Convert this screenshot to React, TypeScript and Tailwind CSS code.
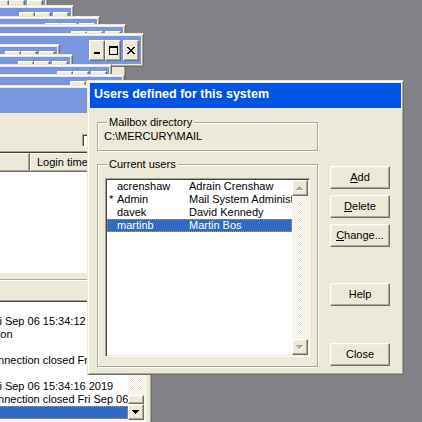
import React from 'react';

type Win = { top: number; right: number; strip?: boolean };

// cascaded child windows behind the dialog, in paint order
const windows: Win[] = [
  { top: -7, right: 48 },
  { top: 5, right: 74 },
  { top: 16, right: 100 },
  { top: 24, right: 126 },
  { top: 33, right: 144, strip: true },
  { top: 44, right: 60 },
  { top: 54, right: 73 },
  { top: 64, right: 112 },
  { top: 74, right: 125 },
];

const users = [
  { flag: '', login: 'acrenshaw', name: 'Adrain Crenshaw' },
  { flag: '*', login: 'Admin', name: 'Mail System Administrator' },
  { flag: '', login: 'davek', name: 'David Kennedy' },
  { flag: '', login: 'martinb', name: 'Martin Bos' },
];

const selectedUser = 'martinb';

const logLines = [
  { text: '', indent: 'pl-[52px]' },
  { text: 'Fri Sep 06 15:34:12 2019', indent: 'pl-[52px]' },
  { text: 'Logon', indent: 'pl-[45px]' },
  { text: '', indent: 'pl-[52px]' },
  { text: 'Connection closed Fri Sep 06 15:34:13 2019', indent: 'pl-[47px]' },
  { text: '', indent: 'pl-[52px]' },
  { text: 'Fri Sep 06 15:34:16 2019', indent: 'pl-[52px]' },
  { text: 'Connection closed Fri Sep 06 15:34:17 2019', indent: 'pl-[47px]' },
];

const raised =
  'border border-t-white border-l-white border-r-[#716f64] border-b-[#716f64] bg-[#ece9d8] shadow-[inset_-1px_-1px_0_#aca899,inset_1px_1px_0_#f1efe2]';
const frame =
  'border border-t-[#ece9d8] border-l-[#ece9d8] border-r-[#716f64] border-b-[#716f64] bg-[#ece9d8] p-[2px] shadow-[inset_1px_1px_0_#fff,inset_-1px_-1px_0_#aca899]';
const sunken =
  'border border-t-[#aca899] border-l-[#aca899] border-r-white border-b-white p-px shadow-[inset_1px_1px_0_#404040,inset_-1px_-1px_0_#f1efe2]';
const groupBox =
  'min-w-0 border border-[#aca899] shadow-[inset_1px_1px_0_#fff,1px_1px_0_#fff]';

function Arrow({ down, disabled }: { down?: boolean; disabled?: boolean }) {
  const d = down
    ? 'M0 0h7v1H0zM1 1h5v1H1zM2 2h3v1H2zM3 3h1v1H3z'
    : 'M3 0h1v1H3zM2 1h3v1H2zM1 2h5v1H1zM0 3h7v1H0z';
  return (
    <svg width="8" height="5" shapeRendering="crispEdges">
      {disabled && <path d={d} fill="#fff" transform="translate(1 1)" />}
      <path d={d} fill={disabled ? '#aca899' : '#000'} />
    </svg>
  );
}

function ScrollButton({ down, disabled }: { down?: boolean; disabled?: boolean }) {
  return (
    <div className={`${raised} flex h-4 w-4 shrink-0 items-center justify-center`}>
      <Arrow down={down} disabled={disabled} />
    </div>
  );
}

function CaptionButtons() {
  return (
    <div className="flex">
      <div className={`${raised} flex h-[21px] w-4 items-end justify-start pb-[6px] pl-[4px]`}>
        <svg width="6" height="2" shapeRendering="crispEdges">
          <rect width="6" height="2" fill="#000" />
        </svg>
      </div>
      <div className={`${raised} flex h-[21px] w-4 items-center justify-center`}>
        <svg width="9" height="9" shapeRendering="crispEdges">
          <path d="M0 0h9v2H0zM0 2h1v7H0zM8 2h1v7H8zM0 8h9v1H0z" fill="#000" />
        </svg>
      </div>
      <div className={`${raised} ml-[2px] flex h-[21px] w-4 items-center justify-center`}>
        <svg width="8" height="7" shapeRendering="crispEdges">
          <path
            d="M0 0h2v1H0zM6 0h2v1H6zM1 1h2v1H1zM5 1h2v1H5zM2 2h4v1H2zM3 3h2v1H3zM2 4h4v1H2zM1 5h2v1H1zM5 5h2v1H5zM0 6h2v1H0zM6 6h2v1H6z"
            fill="#000"
          />
        </svg>
      </div>
    </div>
  );
}

function CascadeWindow({ top, right, strip }: Win) {
  const width = 260;
  return (
    <div
      className={`${frame} absolute flex flex-col`}
      style={{ top, left: right - width, width, height: strip ? 34 : 320 }}
    >
      <div className="flex h-[28px] shrink-0 items-start justify-end bg-[#7a96df] pr-[2px] pt-[4px]">
        <CaptionButtons />
      </div>
    </div>
  );
}

function MainWindow() {
  return (
    <div className={`${frame} absolute left-[-68px] top-[85px] flex h-[345px] w-[220px] flex-col`}>
      <div className="flex h-[25px] shrink-0 items-start justify-end bg-[#7a96df] pr-[2px] pt-[2px]">
        <CaptionButtons />
      </div>
      <div className="flex flex-1 flex-col pr-[3px]">
        <div className="h-[38px] shrink-0 pl-[147px] pt-[21px]">
          <div className={`${sunken} h-[13px] w-[13px] bg-white`} />
        </div>
        <div className="shrink-0 border-t border-t-[#aca899] pt-px shadow-[inset_0_1px_0_#404040]">
          <div className="flex h-[19px] overflow-hidden">
            <div className="w-[95px] shrink-0 border-r border-b border-r-[#716f64] border-b-[#716f64] shadow-[inset_1px_1px_0_#fff,inset_-1px_-1px_0_#aca899]" />
            <div className="w-[120px] shrink-0 border-r border-b border-r-[#716f64] border-b-[#716f64] pl-[7px] leading-[18px] shadow-[inset_1px_1px_0_#fff,inset_-1px_-1px_0_#aca899]">
              Login time
            </div>
          </div>
          <div className="h-[101px] bg-white" />
        </div>
        <div className="h-[27px] shrink-0 pt-[6px]">
          <div className="border-t border-b border-t-[#aca899] border-b-white" />
        </div>
        <div className={`${sunken} flex h-[122px] shrink-0 bg-white`}>
          <div className="flex flex-1 flex-col overflow-hidden">
            {logLines.map((line, i) => (
              <div key={i} className={`h-[13px] shrink-0 whitespace-nowrap ${line.indent}`}>
                {line.text}
              </div>
            ))}
            <div className="h-[13px] shrink-0 bg-[#316ac5] outline-1 outline-dotted outline-[#ce953a] -outline-offset-1" />
          </div>
          <div className="flex w-4 shrink-0 flex-col">
            <ScrollButton />
            <div className="flex-1 bg-[repeating-conic-gradient(#fff_0_25%,#ece9d8_0_50%)] bg-[length:2px_2px]" />
            <div className={`${raised} h-[9px] shrink-0`} />
            <ScrollButton down />
          </div>
        </div>
      </div>
    </div>
  );
}

function DialogButton({ children, className = '' }: { children: React.ReactNode; className?: string }) {
  return (
    <div className={`${raised} flex h-[23px] w-[60px] items-center justify-center ${className}`}>
      {children}
    </div>
  );
}

function UsersDialog() {
  return (
    <div className={`${frame} absolute left-[87px] top-[80px] flex h-[295px] w-[317px] flex-col`}>
      <div className="h-[25px] shrink-0 bg-[#0054e3] pl-[4px] text-[12.5px] font-bold leading-[23px] text-white">
        Users defined for this system
      </div>
      <div className="flex flex-1 pl-[7px] pt-[8px]">
        <div className="flex w-[221px] shrink-0 flex-col">
          <fieldset className={groupBox}>
            <legend className="ml-[9px] bg-[#ece9d8] px-[2px] leading-[13px]">Mailbox directory</legend>
            <div className="pb-[7px] pl-[6px] pt-px">C:\MERCURY\MAIL</div>
          </fieldset>
          <fieldset className={`${groupBox} mt-[7px]`}>
            <legend className="ml-[9px] bg-[#ece9d8] px-[2px] leading-[13px]">Current users</legend>
            <div className="px-[7px] pb-[9px] pt-[7px]">
              <div className={`${sunken} flex h-[179px] bg-white`}>
                <div className="min-w-0 flex-1 overflow-hidden">
                  {users.map((u) => (
                    <div
                      key={u.login}
                      className={
                        u.login === selectedUser
                          ? 'flex h-[13px] whitespace-nowrap bg-[#316ac5] text-white outline-1 outline-dotted outline-[#ce953a] -outline-offset-1'
                          : 'flex h-[13px] whitespace-nowrap'
                      }
                    >
                      <span className="w-[10px] shrink-0 pl-[2px]">{u.flag}</span>
                      <span className="w-[72px] shrink-0">{u.login}</span>
                      <span>{u.name}</span>
                    </div>
                  ))}
                </div>
                <div className="flex w-4 shrink-0 flex-col">
                  <ScrollButton disabled />
                  <div className="flex-1 bg-[repeating-conic-gradient(#fff_0_25%,#ece9d8_0_50%)] bg-[length:2px_2px]" />
                  <ScrollButton down disabled />
                </div>
              </div>
            </div>
          </fieldset>
        </div>
        <div className="ml-[12px] flex w-[60px] flex-col pt-[50px]">
          <DialogButton>
            <span className="underline">A</span>dd
          </DialogButton>
          <DialogButton className="mt-[6px]">
            <span className="underline">D</span>elete
          </DialogButton>
          <DialogButton className="mt-[6px]">
            <span className="underline">C</span>hange...
          </DialogButton>
          <DialogButton className="mt-[36px]">Help</DialogButton>
          <DialogButton className="mt-[37px]">Close</DialogButton>
        </div>
      </div>
    </div>
  );
}

export default function App() {
  return (
    <div className="relative h-[422px] w-[422px] overflow-hidden bg-[#838188] font-['Liberation_Sans',Arial,sans-serif] text-[11px] leading-[13px] text-black">
      {windows.map((w, i) => (
        <CascadeWindow key={i} {...w} />
      ))}
      <MainWindow />
      <UsersDialog />
    </div>
  );
}
